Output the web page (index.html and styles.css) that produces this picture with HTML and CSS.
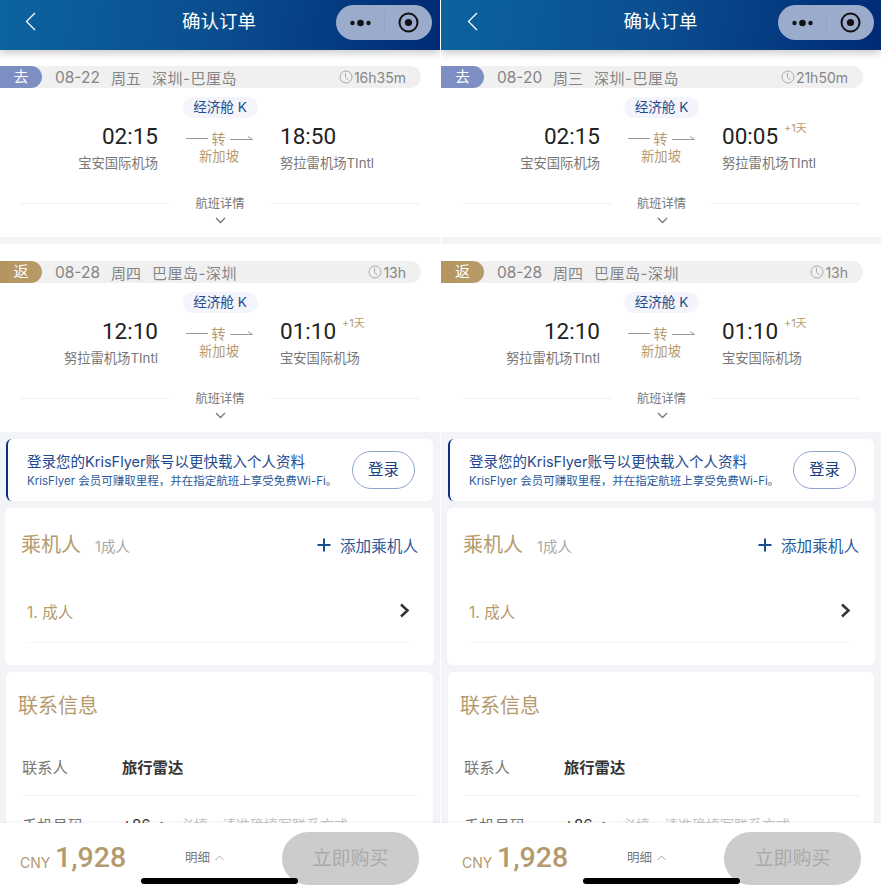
FILE: index.html
```html
<!DOCTYPE html>
<html lang="zh-CN">
<head>
    <meta charset="UTF-8">
    <meta name="viewport" content="width=device-width, initial-scale=1.0">
    <title>确认订单</title>
    <link rel="stylesheet" href="styles.css">
</head>
<body>
<div class="screens">

    <!-- 左边 -->
    <div class="panel">
        <header class="header">
            <svg class="back" width="11" height="19" viewBox="0 0 11 19"><path d="M10 1 1.500 9.500 10 18" fill="none" stroke="#fff" stroke-width="1.300"/></svg>
            <h1 class="title">确认订单</h1>
            <div class="capsule">
                <svg class="capsule-dots" width="21" height="8" viewBox="0 0 21 8"><circle cx="2.500" cy="4" r="2.200"/><circle cx="10.500" cy="4" r="3.300"/><circle cx="18.500" cy="4" r="2.200"/></svg>
                <span class="capsule-line"></span>
                <svg width="21" height="21" viewBox="0 0 21 21"><circle cx="10.500" cy="10.500" r="9" fill="none" stroke="#111" stroke-width="2"/><circle cx="10.500" cy="10.500" r="3.600" fill="#111"/></svg>
            </div>
        </header>

        <section class="flight flight-first">
            <div class="strip">
                <span class="tag tag-go">去</span>
                <span class="strip-date">08-22</span><span class="strip-day">周五</span><span class="strip-city">深圳-巴厘岛</span>
                <span class="strip-time"><svg width="14" height="14" viewBox="0 0 14 14"><circle cx="7" cy="7" r="6" fill="none" stroke="#aaa"/><path d="M6.500 3v4.200l3 3" fill="none" stroke="#aaa"/></svg>16h35m</span>
            </div>
            <div class="cabin"><span class="cabin-pill">经济舱 K</span></div>
            <div class="route">
                <div class="stop stop-from"><div class="clock">02:15</div><div class="airport">宝安国际机场</div></div>
                <div class="via">
                    <div class="via-line"><svg width="22" height="4" viewBox="0 0 22 4"><path d="M0 2.500h22" stroke="#999"/></svg><span>转</span><svg width="23" height="4" viewBox="0 0 23 4"><path d="M0 3.500h22.500L18 .5" fill="none" stroke="#999"/></svg></div>
                    <div class="via-city">新加坡</div>
                </div>
                <div class="stop"><div class="clock">18:50</div><div class="airport">努拉雷机场TIntl</div></div>
            </div>
            <div class="details"><span class="details-line"></span><span>航班详情</span><span class="details-line"></span></div>
            <svg class="details-arrow" width="11" height="7" viewBox="0 0 11 7"><path d="M1 1l4.500 4.500L10 1" fill="none" stroke="#777" stroke-width="1.300"/></svg>
        </section>

        <section class="flight">
            <div class="strip">
                <span class="tag tag-back">返</span>
                <span class="strip-date">08-28</span><span class="strip-day">周四</span><span class="strip-city">巴厘岛-深圳</span>
                <span class="strip-time"><svg width="14" height="14" viewBox="0 0 14 14"><circle cx="7" cy="7" r="6" fill="none" stroke="#aaa"/><path d="M6.500 3v4.200l3 3" fill="none" stroke="#aaa"/></svg>13h</span>
            </div>
            <div class="cabin"><span class="cabin-pill">经济舱 K</span></div>
            <div class="route">
                <div class="stop stop-from"><div class="clock">12:10</div><div class="airport">努拉雷机场TIntl</div></div>
                <div class="via">
                    <div class="via-line"><svg width="22" height="4" viewBox="0 0 22 4"><path d="M0 2.500h22" stroke="#999"/></svg><span>转</span><svg width="23" height="4" viewBox="0 0 23 4"><path d="M0 3.500h22.500L18 .5" fill="none" stroke="#999"/></svg></div>
                    <div class="via-city">新加坡</div>
                </div>
                <div class="stop"><div class="clock">01:10<sup class="plus">+1天</sup></div><div class="airport">宝安国际机场</div></div>
            </div>
            <div class="details"><span class="details-line"></span><span>航班详情</span><span class="details-line"></span></div>
            <svg class="details-arrow" width="11" height="7" viewBox="0 0 11 7"><path d="M1 1l4.500 4.500L10 1" fill="none" stroke="#777" stroke-width="1.300"/></svg>
        </section>

        <div class="cards">
            <div class="login">
                <div class="login-text">
                    <div class="login-title">登录您的KrisFlyer账号以更快载入个人资料</div>
                    <div class="login-sub">KrisFlyer 会员可赚取里程，并在指定航班上享受免费Wi-Fi。</div>
                </div>
                <span class="login-btn">登录</span>
            </div>

            <div class="card card-passenger">
                <div class="card-head">
                    <span class="card-title">乘机人</span>
                    <span class="card-count">1成人</span>
                    <span class="add">
                        <svg width="14" height="14" viewBox="0 0 14 14"><path d="M7 .5v13M.5 7h13" stroke="#174f8f" stroke-width="2"/></svg>
                        添加乘机人
                    </span>
                </div>
                <div class="passenger">
                    <span>1. 成人</span>
                    <svg width="11" height="15" viewBox="0 0 11 15"><path d="M2 1.500 8.500 7.500 2 13.500" fill="none" stroke="#333" stroke-width="2.500"/></svg>
                </div>
            </div>

            <div class="card card-contact">
                <div class="card-title">联系信息</div>
                <div class="field field-first"><span class="field-label">联系人</span><span class="field-value">旅行雷达</span></div>
                <div class="field"><span class="field-label">手机号码</span><span class="field-code">+86 ›</span><span class="field-hint">必填，请准确填写联系方式</span></div>
            </div>
        </div>

        <footer class="footer">
            <span class="currency">CNY</span><span class="price">1,928</span>
            <span class="breakdown">明细<svg width="9" height="6" viewBox="0 0 9 6"><path d="M.5 5 4.500 1l4 4" fill="none" stroke="#aaa"/></svg></span>
            <span class="buy">立即购买</span>
        </footer>
        <div class="home-bar"></div>
    </div>

    <!-- 右边 -->
    <div class="panel panel-right">
        <header class="header">
            <svg class="back" width="11" height="19" viewBox="0 0 11 19"><path d="M10 1 1.500 9.500 10 18" fill="none" stroke="#fff" stroke-width="1.300"/></svg>
            <h1 class="title">确认订单</h1>
            <div class="capsule">
                <svg class="capsule-dots" width="21" height="8" viewBox="0 0 21 8"><circle cx="2.500" cy="4" r="2.200"/><circle cx="10.500" cy="4" r="3.300"/><circle cx="18.500" cy="4" r="2.200"/></svg>
                <span class="capsule-line"></span>
                <svg width="21" height="21" viewBox="0 0 21 21"><circle cx="10.500" cy="10.500" r="9" fill="none" stroke="#111" stroke-width="2"/><circle cx="10.500" cy="10.500" r="3.600" fill="#111"/></svg>
            </div>
        </header>

        <section class="flight flight-first">
            <div class="strip">
                <span class="tag tag-go">去</span>
                <span class="strip-date">08-20</span><span class="strip-day">周三</span><span class="strip-city">深圳-巴厘岛</span>
                <span class="strip-time"><svg width="14" height="14" viewBox="0 0 14 14"><circle cx="7" cy="7" r="6" fill="none" stroke="#aaa"/><path d="M6.500 3v4.200l3 3" fill="none" stroke="#aaa"/></svg>21h50m</span>
            </div>
            <div class="cabin"><span class="cabin-pill">经济舱 K</span></div>
            <div class="route">
                <div class="stop stop-from"><div class="clock">02:15</div><div class="airport">宝安国际机场</div></div>
                <div class="via">
                    <div class="via-line"><svg width="22" height="4" viewBox="0 0 22 4"><path d="M0 2.500h22" stroke="#999"/></svg><span>转</span><svg width="23" height="4" viewBox="0 0 23 4"><path d="M0 3.500h22.500L18 .5" fill="none" stroke="#999"/></svg></div>
                    <div class="via-city">新加坡</div>
                </div>
                <div class="stop"><div class="clock">00:05<sup class="plus">+1天</sup></div><div class="airport">努拉雷机场TIntl</div></div>
            </div>
            <div class="details"><span class="details-line"></span><span>航班详情</span><span class="details-line"></span></div>
            <svg class="details-arrow" width="11" height="7" viewBox="0 0 11 7"><path d="M1 1l4.500 4.500L10 1" fill="none" stroke="#777" stroke-width="1.300"/></svg>
        </section>

        <section class="flight">
            <div class="strip">
                <span class="tag tag-back">返</span>
                <span class="strip-date">08-28</span><span class="strip-day">周四</span><span class="strip-city">巴厘岛-深圳</span>
                <span class="strip-time"><svg width="14" height="14" viewBox="0 0 14 14"><circle cx="7" cy="7" r="6" fill="none" stroke="#aaa"/><path d="M6.500 3v4.200l3 3" fill="none" stroke="#aaa"/></svg>13h</span>
            </div>
            <div class="cabin"><span class="cabin-pill">经济舱 K</span></div>
            <div class="route">
                <div class="stop stop-from"><div class="clock">12:10</div><div class="airport">努拉雷机场TIntl</div></div>
                <div class="via">
                    <div class="via-line"><svg width="22" height="4" viewBox="0 0 22 4"><path d="M0 2.500h22" stroke="#999"/></svg><span>转</span><svg width="23" height="4" viewBox="0 0 23 4"><path d="M0 3.500h22.500L18 .5" fill="none" stroke="#999"/></svg></div>
                    <div class="via-city">新加坡</div>
                </div>
                <div class="stop"><div class="clock">01:10<sup class="plus">+1天</sup></div><div class="airport">宝安国际机场</div></div>
            </div>
            <div class="details"><span class="details-line"></span><span>航班详情</span><span class="details-line"></span></div>
            <svg class="details-arrow" width="11" height="7" viewBox="0 0 11 7"><path d="M1 1l4.500 4.500L10 1" fill="none" stroke="#777" stroke-width="1.300"/></svg>
        </section>

        <div class="cards">
            <div class="login">
                <div class="login-text">
                    <div class="login-title">登录您的KrisFlyer账号以更快载入个人资料</div>
                    <div class="login-sub">KrisFlyer 会员可赚取里程，并在指定航班上享受免费Wi-Fi。</div>
                </div>
                <span class="login-btn">登录</span>
            </div>

            <div class="card card-passenger">
                <div class="card-head">
                    <span class="card-title">乘机人</span>
                    <span class="card-count">1成人</span>
                    <span class="add">
                        <svg width="14" height="14" viewBox="0 0 14 14"><path d="M7 .5v13M.5 7h13" stroke="#174f8f" stroke-width="2"/></svg>
                        添加乘机人
                    </span>
                </div>
                <div class="passenger">
                    <span>1. 成人</span>
                    <svg width="11" height="15" viewBox="0 0 11 15"><path d="M2 1.500 8.500 7.500 2 13.500" fill="none" stroke="#333" stroke-width="2.500"/></svg>
                </div>
            </div>

            <div class="card card-contact">
                <div class="card-title">联系信息</div>
                <div class="field field-first"><span class="field-label">联系人</span><span class="field-value">旅行雷达</span></div>
                <div class="field"><span class="field-label">手机号码</span><span class="field-code">+86 ›</span><span class="field-hint">必填，请准确填写联系方式</span></div>
            </div>
        </div>

        <footer class="footer">
            <span class="currency">CNY</span><span class="price">1,928</span>
            <span class="breakdown">明细<svg width="9" height="6" viewBox="0 0 9 6"><path d="M.5 5 4.500 1l4 4" fill="none" stroke="#aaa"/></svg></span>
            <span class="buy">立即购买</span>
        </footer>
        <div class="home-bar"></div>
    </div>
</div>
</body>
</html>
```

FILE: styles.css
```css
* {
    box-sizing: border-box;
}

body {
    margin: 0;
    background: #fff;
    font-family: Inter, "Noto Sans CJK SC", sans-serif;
    overflow: hidden;
}

.screens {
    display: grid;
    grid-template-columns: 440px 440px;
    gap: 1px;
    height: 885px;
}

.panel {
    --shift: 0px;
    position: relative;
    height: 885px;
    overflow: hidden;
    background: #f3f4f8;
}

.panel-right {
    --shift: 1px;
}

/* 顶部 */
.header {
    position: relative;
    z-index: 1;
    display: flex;
    align-items: center;
    justify-content: center;
    height: 50px;
    padding: 0 2px 8px var(--shift);
    background: linear-gradient(95deg, #0c639f 0%, #0a4d8e 50%, #002a75 100%);
    box-shadow: 0 3px 8px rgba(0, 0, 0, 0.22);
}

.back {
    position: absolute;
    left: calc(25px + var(--shift));
    top: 12px;
}

.title {
    margin: 0;
    font-size: 18.500px;
    font-weight: 400;
    color: #fff;
    line-height: 26px;
}

.capsule {
    position: absolute;
    left: calc(336px + var(--shift));
    top: 5px;
    display: flex;
    align-items: center;
    width: 96px;
    height: 35px;
    padding-left: 14px;
    border-radius: 18px;
    background: #9aabcc;
}

.capsule-dots {
    fill: #111;
}

.capsule-line {
    width: 1px;
    height: 22px;
    margin: 0 13px;
    background: #92a3c5;
}

/* 航班 */
.flight {
    height: 188px;
    margin-bottom: 7px;
    padding: 17px 0 0 var(--shift);
    background: #fff;
}

.flight-first {
    height: 187px;
    padding-top: 16px;
}

.strip {
    display: flex;
    align-items: center;
    width: 421px;
    height: 22px;
    border-radius: 0 11px 11px 0;
    background: #f0f0f1;
    font-size: 15.500px;
    color: #858585;
}

.tag {
    width: 42px;
    height: 22px;
    margin-left: calc(-1 * var(--shift));
    margin-right: 13px;
    border-radius: 0 11px 11px 0;
    font-size: 15px;
    line-height: 22px;
    text-align: center;
    color: #fff;
}

.panel-right .tag {
    width: 43px;
}

.tag-go {
    background: #7d8ec3;
}

.tag-back {
    background: linear-gradient(90deg, #b4955f, #b89b6b);
}

.strip-date {
    width: 56px;
}

.strip-day {
    width: 41px;
    font-size: 15px;
}

.strip-city {
    font-size: 15px;
    letter-spacing: 0.500px;
}

.strip-time {
    display: flex;
    align-items: center;
    gap: 1px;
    margin-left: auto;
    margin-right: 15px;
    font-size: 14px;
}

.cabin {
    display: flex;
    justify-content: center;
    margin-top: 9px;
}

.cabin-pill {
    width: 75px;
    height: 21px;
    border-radius: 11px;
    background: #f3f5fb;
    font-size: 13.600px;
    line-height: 21px;
    text-align: center;
    color: #1f4a8f;
}

.route {
    display: grid;
    grid-template-columns: 158px 122px 1fr;
    margin-top: 2px;
}

.stop-from {
    text-align: right;
}

.clock {
    height: 30px;
    font-family: Roboto, sans-serif;
    font-size: 22.500px;
    font-weight: 400;
    line-height: 32px;
    color: #222;
}

.plus {
    margin-left: 6px;
    font-family: Inter, "Noto Sans CJK SC", sans-serif;
    font-size: 11px;
    font-weight: 400;
    line-height: 0;
    vertical-align: 12px;
    color: #bb9c6c;
}

.airport {
    margin-top: 3px;
    font-size: 13.300px;
    line-height: 20px;
    color: #777;
}

.via {
    padding-top: 9px;
    text-align: center;
}

.via-line {
    display: flex;
    align-items: center;
    justify-content: center;
    gap: 4px;
    height: 18px;
    font-size: 14px;
    color: #b59a6e;
}

.via-city {
    font-size: 13.300px;
    line-height: 18px;
    color: #b59a6e;
}

.details {
    display: flex;
    align-items: center;
    gap: 25px;
    height: 16px;
    margin-top: 22px;
    padding: 0 21px;
    font-size: 12.300px;
    color: #777;
}

.details-line {
    flex: 1;
    height: 1px;
    background: #f0f0f2;
}

.details-arrow {
    display: block;
    margin: 6px 0 0 215px;
}

/* 卡片 */
.cards {
    padding-left: var(--shift);
}

.login {
    display: flex;
    align-items: center;
    justify-content: space-between;
    height: 62px;
    margin: 0 7px 7px 6px;
    padding: 0 18px 0 19px;
    border-left: 2px solid #0b3080;
    border-radius: 6px;
    background: #fff;
}

.login-title {
    font-size: 14.500px;
    line-height: 20px;
    color: #1f4a8f;
}

.login-sub {
    font-size: 11.500px;
    line-height: 16px;
    margin-top: 1px;
    color: #2a5a9a;
}

.login-btn {
    width: 63px;
    height: 38px;
    border: 1px solid #8fa6cc;
    border-radius: 19px;
    font-size: 15.500px;
    line-height: 36px;
    text-align: center;
    color: #1c3f80;
}

.card {
    border-radius: 6px;
    background: #fff;
}

.card-passenger {
    height: 157px;
    margin: 0 6px 7px 5px;
    padding: 23px 16px 0;
}

.card-head {
    display: flex;
    align-items: center;
    height: 28px;
}

.card-title {
    font-size: 20px;
    line-height: 28px;
    color: #b59a6e;
}

.card-count {
    margin-left: 14px;
    font-size: 14.500px;
    color: #aaa;
}

.add {
    display: flex;
    align-items: center;
    gap: 9px;
    margin-left: auto;
    font-size: 15.600px;
    color: #2a5a9a;
}

.passenger {
    display: flex;
    align-items: center;
    justify-content: space-between;
    height: 62px;
    margin: 22px 8px 0 6px;
    padding-bottom: 2px;
    border-bottom: 1px solid #f3f3f5;
    font-size: 15.500px;
    color: #b59a6e;
}

.card-contact {
    height: 220px;
    margin: 0 7px 0 6px;
    padding: 19px 15px 0 12px;
}

.card-contact .card-title {
    padding-top: 1px;
}

.field {
    display: flex;
    align-items: center;
    height: 56px;
    margin-left: 4px;
    font-size: 15.300px;
}

.field-first {
    height: 57px;
    margin-top: 19px;
    padding-bottom: 2px;
    border-bottom: 1px solid #f0f0f2;
}

.field-label {
    width: 100px;
    color: #777;
}

.field-value {
    font-weight: 700;
    color: #333;
}

.field-code {
    width: 58px;
    font-size: 15px;
    word-spacing: 5px;
    color: #333;
}

.field-hint {
    font-size: 14px;
    color: #c4c4c4;
}

/* 底部 */
.footer {
    position: absolute;
    left: 0;
    right: 0;
    bottom: 0;
    height: 62px;
    background: #fff;
    box-shadow: 0 -1px 3px rgba(0, 0, 0, 0.06);
}

.currency {
    position: absolute;
    left: calc(20px + var(--shift));
    top: 31px;
    font-size: 14px;
    line-height: 18px;
    color: #b59a6e;
}

.price {
    position: absolute;
    left: calc(55px + var(--shift));
    top: 17px;
    font-family: Roboto, sans-serif;
    font-size: 28.500px;
    font-weight: 500;
    line-height: 36px;
    color: #b59a6e;
}

.breakdown {
    position: absolute;
    left: calc(185px + var(--shift));
    top: 26px;
    display: flex;
    align-items: center;
    gap: 5px;
    font-size: 12.500px;
    line-height: 18px;
    color: #777;
}

.buy {
    position: absolute;
    left: calc(282px + var(--shift));
    top: 9px;
    width: 137px;
    height: 53px;
    border-radius: 27px;
    background: #ccc;
    font-size: 19px;
    line-height: 53px;
    text-align: center;
    color: #aaa;
}

.home-bar {
    position: absolute;
    left: calc(141px + var(--shift));
    bottom: 1px;
    width: 157px;
    height: 6px;
    border-radius: 3px;
    background: #000;
}
```
